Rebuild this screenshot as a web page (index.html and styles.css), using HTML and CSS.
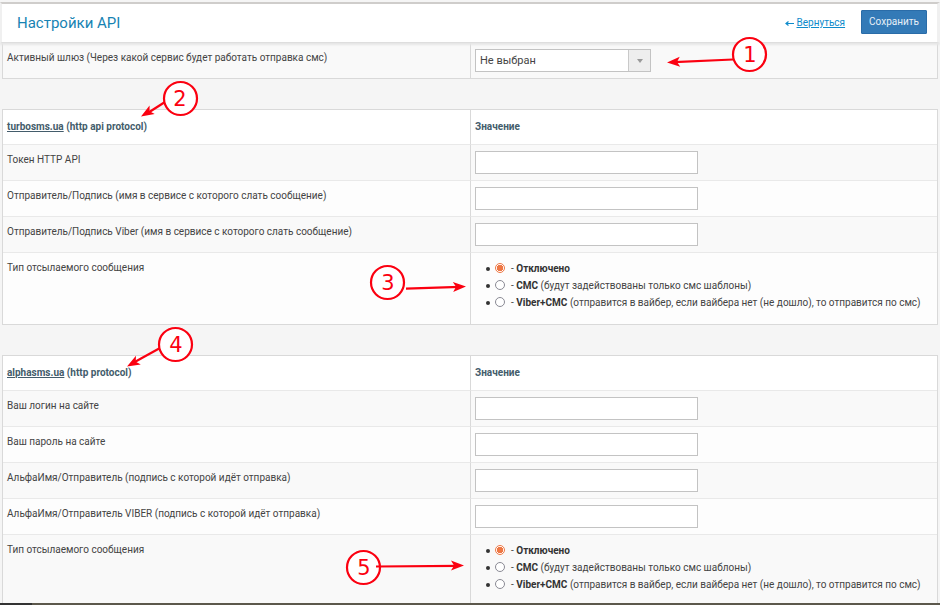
FILE: index.html
```html
<!DOCTYPE html>
<html lang="ru">
<head>
<meta charset="utf-8">
<title>Настройки API</title>
<link rel="stylesheet" href="styles.css">
</head>
<body>
<form class="page">
  <header class="topbar">
    <h1>Настройки API</h1>
    <nav class="actions">
      <span class="back"><svg class="back-arrow" viewBox="0 0 9 7" aria-hidden="true"><path d="M9 3.5H1M3.5 1.500L1 3.5L3.5 5.500"/></svg><a href="#">Вернуться</a></span>
      <button class="save" type="submit">Сохранить</button>
    </nav>
  </header>

  <table class="settings first">
    <tbody>
      <tr>
        <td><label for="gateway">Активный шлюз (Через какой сервис будет работать отправка смс)</label></td>
        <td><span class="select"><select id="gateway"><option>Не выбран</option></select></span></td>
      </tr>
    </tbody>
  </table>

  <table class="settings">
    <thead>
      <tr><th><a href="#">turbosms.ua</a> (http api protocol)</th><th>Значение</th></tr>
    </thead>
    <tbody>
      <tr>
        <td><label for="token">Токен HTTP API</label></td>
        <td><input class="text" type="text" id="token"></td>
      </tr>
      <tr>
        <td><label for="sender">Отправитель/Подпись (имя в сервисе с которого слать сообщение)</label></td>
        <td><input class="text" type="text" id="sender"></td>
      </tr>
      <tr>
        <td><label for="sender-viber">Отправитель/Подпись Viber (имя в сервисе с которого слать сообщение)</label></td>
        <td><input class="text" type="text" id="sender-viber"></td>
      </tr>
      <tr class="types">
        <td>Тип отсылаемого сообщения</td>
        <td>
          <ul>
            <li><label><input type="radio" name="turbo" checked><span>- <b>Отключено</b></span></label></li>
            <li><label><input type="radio" name="turbo"><span>- <b>СМС</b> (будут задействованы только смс шаблоны)</span></label></li>
            <li><label><input type="radio" name="turbo"><span>- <b>Viber+СМС</b> (отправится в вайбер, если вайбера нет (не дошло), то отправится по смс)</span></label></li>
          </ul>
        </td>
      </tr>
    </tbody>
  </table>

  <table class="settings">
    <thead>
      <tr><th><a href="#">alphasms.ua</a> (http protocol)</th><th>Значение</th></tr>
    </thead>
    <tbody>
      <tr>
        <td><label for="login">Ваш логин на сайте</label></td>
        <td><input class="text" type="text" id="login"></td>
      </tr>
      <tr>
        <td><label for="password">Ваш пароль на сайте</label></td>
        <td><input class="text" type="text" id="password"></td>
      </tr>
      <tr>
        <td><label for="alpha">АльфаИмя/Отправитель (подпись с которой идёт отправка)</label></td>
        <td><input class="text" type="text" id="alpha"></td>
      </tr>
      <tr>
        <td><label for="alpha-viber">АльфаИмя/Отправитель VIBER (подпись с которой идёт отправка)</label></td>
        <td><input class="text" type="text" id="alpha-viber"></td>
      </tr>
      <tr class="types">
        <td>Тип отсылаемого сообщения</td>
        <td>
          <ul>
            <li><label><input type="radio" name="alphasms" checked><span>- <b>Отключено</b></span></label></li>
            <li><label><input type="radio" name="alphasms"><span>- <b>СМС</b> (будут задействованы только смс шаблоны)</span></label></li>
            <li><label><input type="radio" name="alphasms"><span>- <b>Viber+СМС</b> (отправится в вайбер, если вайбера нет (не дошло), то отправится по смс)</span></label></li>
          </ul>
        </td>
      </tr>
    </tbody>
  </table>
</form>
<footer class="taskbar"></footer>

<svg class="marks" width="940" height="605" viewBox="0 0 940 605">
  <defs>
    <path id="head" d="M0 0L-13 -5L-10 0L-13 5Z"/>
  </defs>
  <g class="lines">
    <path d="M733 59.500L674 62.200"/>
    <path d="M165 102L147 113.500"/>
    <path d="M406 288.600L460 286.800"/>
    <path d="M160 348L132 363.500"/>
  </g>
  <g class="heads">
    <use href="#head" transform="translate(667 62.500) rotate(177)"/>
    <use href="#head" transform="translate(141 116.500) rotate(149)"/>
    <use href="#head" transform="translate(466 286.500) rotate(-2)"/>
    <use href="#head" transform="translate(127 366.500) rotate(151)"/>
    <use href="#head" transform="translate(464 565.500)"/>
  </g>
  <g class="rings">
    <circle cx="749.500" cy="54.500" r="16.500"/>
    <circle cx="180.500" cy="98.500" r="16.500"/>
    <circle cx="387.500" cy="282.500" r="16.500"/>
    <circle cx="175.500" cy="344.500" r="16.500"/>
    <circle cx="363.500" cy="567.500" r="16.500"/>
  </g>
  <path class="lines" d="M376 566.500L458 565.800"/>
  <g class="digits">
    <text x="750" y="62">1</text>
    <text x="180" y="106">2</text>
    <text x="388" y="290">3</text>
    <text x="176" y="352">4</text>
    <text x="364" y="575">5</text>
  </g>
</svg>
</body>
</html>
```
FILE: styles.css
```css
* { box-sizing: border-box; }

body {
  margin: 0;
  height: 100vh;
  display: flex;
  flex-direction: column;
  overflow: hidden;
  position: relative;
  background: #f5f5f5;
  color: #444;
  font: 10px/16px Roboto, "Liberation Sans", sans-serif;
}

.page {
  flex: 1;
  min-height: 0;
  overflow: hidden;
  padding: 2px 2px 0;
}

.topbar {
  position: relative;
  display: flex;
  justify-content: space-between;
  align-items: center;
  height: 41px;
  margin: 0 -2px;
  padding: 0 10px 0 15px;
  background: #fff;
  border: solid;
  border-width: 2px 3px 1px 2px;
  border-color: #cfcdcb #f0f0f0 #dedede;
  box-shadow: 0 2px 2px #e6e6e6;
}

h1 {
  margin: 0;
  color: #1783b3;
  font-size: 15px;
  line-height: 20px;
  font-weight: 400;
}

.actions { display: flex; align-items: center; gap: 16px; }
.back { display: flex; align-items: center; gap: 2px; }
.back a { color: #0e8bcb; }
.back-arrow { width: 9px; height: 7px; fill: none; stroke: #0e8bcb; stroke-width: 1.2; }

.save {
  height: 24px;
  margin-bottom: 2px;
  padding: 0 7px;
  border: 1px solid #2a6ca8;
  border-radius: 1px;
  background: #337ab7;
  color: #e8f0f7;
  font: inherit;
}

.settings {
  width: 100%;
  table-layout: fixed;
  border-collapse: separate;
  border-spacing: 0;
  border: 1px solid #d9d9d9;
  margin-bottom: 30px;
}

.settings.first { border-top: 0; }

th, td {
  height: 36px;
  padding: 6px 4px 0;
  border-bottom: 1px solid #e9e9e9;
  vertical-align: top;
  text-align: left;
}

.first td { height: 35px; }

th + th, td + td { border-left: 1px solid #d9d9d9; }

th {
  height: 35px;
  padding-top: 9px;
  background: #fff;
  color: #435c6b;
  font-weight: 700;
}

th a { color: inherit; }
td:first-child { padding-top: 7px; }
tbody tr { background: #fdfdfd; }
tbody tr:nth-child(odd) { background: #f9f9f9; }
tbody tr:last-child td { border-bottom: 0; }
.types td { height: 71px; }
.types td + td { padding-top: 7px; }

.text, select {
  display: block;
  height: 23px;
  border: 1px solid #c3c3c3;
  border-radius: 0;
  background: #fff;
  color: #444;
  font: inherit;
}

.text { width: 223px; padding: 0 4px; }

.select { position: relative; display: block; width: 176px; }

select {
  width: 100%;
  padding: 0 26px 0 4px;
  appearance: none;
  font-size: 11px;
}

.select::before {
  content: "";
  position: absolute;
  top: 1px;
  right: 1px;
  bottom: 1px;
  width: 21px;
  border-left: 1px solid #c9c9c9;
  background: #eee;
  pointer-events: none;
}

.select::after {
  content: "";
  position: absolute;
  top: 10px;
  right: 8px;
  border: 3px solid transparent;
  border-top: 4px solid #999;
  border-bottom: 0;
  pointer-events: none;
}

ul { margin: 0; padding: 0 0 0 11px; list-style: none; }
li, li label { display: flex; align-items: center; line-height: 17px; }

li::before {
  content: "";
  width: 4px;
  height: 4px;
  margin-right: 5px;
  border-radius: 50%;
  background: #333;
}

b { color: #333; }

li input {
  appearance: none;
  width: 10px;
  height: 10px;
  margin: 0 6px 2px 0;
  border: 1px solid #8a8a94;
  border-radius: 50%;
  background: #fff;
}

li input:checked {
  border-color: #ee7744;
  background: radial-gradient(circle, #ee7744 3px, #fff 3px);
}

.taskbar { height: 2px; background: linear-gradient(90deg, #333 32px, #5c584c 32px); }

.marks { position: absolute; top: 0; left: 0; pointer-events: none; }
.lines { stroke: #fb0010; stroke-width: 2.2; fill: none; }
.heads { fill: #fb0010; }
.rings { fill: #fff; stroke: #fb0010; stroke-width: 2.2; }
.digits { fill: #fb0010; font: 21px "DejaVu Sans", sans-serif; text-anchor: middle; }
```
